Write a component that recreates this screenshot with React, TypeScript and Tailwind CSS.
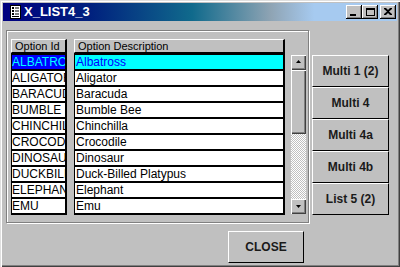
import React from "react";

const ids = ["ALBATROSS", "ALIGATOR", "BARACUDA", "BUMBLE BEE", "CHINCHILLA", "CROCODILE", "DINOSAUR", "DUCKBILL", "ELEPHANT", "EMU"];
const descs = ["Albatross", "Aligator", "Baracuda", "Bumble Bee", "Chinchilla", "Crocodile", "Dinosaur", "Duck-Billed Platypus", "Elephant", "Emu"];
const buttons = ["Multi 1 (2)", "Multi 4", "Multi 4a", "Multi 4b", "List 5 (2)"];

function WinBtn({ children, className = "" }: { children: React.ReactNode; className?: string }) {
  return (
    <div
      className={
        "w-[16px] h-[14px] bg-[#c0c0c0] flex items-center justify-center shadow-[inset_-1px_-1px_0_#000,inset_1px_1px_0_#fff,inset_-2px_-2px_0_#808080] " +
        className
      }
    >
      {children}
    </div>
  );
}

export default function App() {
  return (
    <div className="w-[400px] h-[267px] bg-[#c0c0c0] p-[3px] font-['Liberation_Sans',Arial,sans-serif] overflow-hidden shadow-[inset_1px_1px_0_#dfdfdf,inset_2px_2px_0_#fff,inset_-1px_-1px_0_#404040,inset_-2px_-2px_0_#808080]">
      {/* Title bar */}
      <div className="h-[18px] flex items-center pl-[7px] pr-[1px] bg-[linear-gradient(to_right,#000080_0%,#00207e_22%,#106a8c_48%,#8fa4b4_68%,#a6caf0_79%,#a6caf0_100%)]">
        <svg width="12" height="14" viewBox="0 0 12 14">
          <rect x="0.5" y="0.5" width="10" height="13" fill="#fff" stroke="#000" />
          <rect x="2" y="2" width="2" height="2" fill="#000" />
          <rect x="5" y="2.5" width="4" height="1" fill="#000" />
          <rect x="2" y="5" width="2" height="2" fill="#000" />
          <rect x="5" y="5.5" width="4" height="1" fill="#000" />
          <rect x="2" y="8" width="2" height="2" fill="#000" />
          <rect x="5" y="8.5" width="4" height="1" fill="#000" />
          <rect x="2" y="11" width="7" height="1" fill="#000" />
        </svg>
        <span className="ml-[2px] text-white font-bold text-[13px] leading-[14px]">X_LIST4_3</span>
        <div className="flex-1" />
        <WinBtn>
          <div className="w-[6px] h-[2px] bg-black mt-[6px] -ml-[2px]" />
        </WinBtn>
        <WinBtn>
          <div className="w-[9px] h-[8px] border border-black border-t-2 -mt-[1px]" />
        </WinBtn>
        <WinBtn className="ml-[2px]">
          <svg width="8" height="7" viewBox="0 0 8 7" className="-mt-[1px]">
            <path d="M0 0h2l2 2 2-2h2v1L5 3.5 8 6v1H6L4 5 2 7H0V6l3-2.5L0 1z" fill="#000" />
          </svg>
        </WinBtn>
      </div>

      {/* Body */}
      <div className="flex mt-[9px]">
        <div className="ml-[3px] flex flex-col">
          {/* Group box */}
          <div className="w-[303px] h-[193px] border border-[#808080] shadow-[1px_1px_0_#fff,inset_1px_1px_0_#fff] pt-[8px] pl-[4px] flex">
            {/* Column 1 */}
            <div className="w-[56px] flex flex-col">
              <div className="h-[14px] bg-[#c0c0c0] border-t border-l border-white border-r-2 border-r-black border-b border-b-black text-[11px] leading-[12px] pl-[3px] text-black whitespace-nowrap overflow-hidden">
                Option Id
              </div>
              <div className="border-t-2 border-black">
                {ids.map((t, i) => (
                  <div
                    key={t}
                    className={
                      "h-[16px] border-l border-l-black border-r-2 border-r-black border-b-2 border-b-black text-[12px] leading-[14px] whitespace-nowrap overflow-hidden " +
                      (i === 0 ? "bg-[#0000ff] text-[#00ffff]" : "bg-white text-black")
                    }
                  >
                    {t}
                  </div>
                ))}
              </div>
            </div>
            {/* Column 2 */}
            <div className="w-[211px] ml-[7px] flex flex-col">
              <div className="h-[14px] bg-[#c0c0c0] border-t border-l border-white border-r-2 border-r-black border-b border-b-black text-[11px] leading-[12px] pl-[3px] text-black whitespace-nowrap overflow-hidden">
                Option Description
              </div>
              <div className="border-t-2 border-black">
                {descs.map((t, i) => (
                  <div
                    key={t}
                    className={
                      "h-[16px] border-l border-l-black border-r-2 border-r-black border-b-2 border-b-black text-[12px] leading-[14px] pl-[1px] whitespace-nowrap overflow-hidden " +
                      (i === 0 ? "bg-[#00ffff] text-[#0000ff]" : "bg-white text-black")
                    }
                  >
                    {t}
                  </div>
                ))}
              </div>
            </div>
            {/* Scrollbar */}
            <div className="w-[15px] ml-[6px] mt-[16px] h-[159px] flex flex-col">
              <div className="h-[15px] bg-[#c0c0c0] flex items-center justify-center shadow-[inset_1px_1px_0_#fff,inset_-1px_-1px_0_#404040,inset_-2px_-2px_0_#808080]">
                <svg width="5" height="3" viewBox="0 0 5 3" className="-mt-[2px] -ml-[1px]">
                  <path d="M2.5 0L5 3H0z" fill="#000" />
                </svg>
              </div>
              <div className="h-[64px] bg-[#c0c0c0] shadow-[inset_1px_1px_0_#fff,inset_-1px_-1px_0_#404040,inset_-2px_-2px_0_#808080]" />
              <div className="flex-1 bg-[repeating-conic-gradient(#c0c0c0_0_25%,#ffffff_0_50%)] bg-[length:2px_2px]" />
              <div className="h-[15px] bg-[#c0c0c0] flex items-center justify-center shadow-[inset_1px_1px_0_#fff,inset_-1px_-1px_0_#404040,inset_-2px_-2px_0_#808080]">
                <svg width="5" height="3" viewBox="0 0 5 3" className="-ml-[1px]">
                  <path d="M0 0H5L2.5 3z" fill="#000" />
                </svg>
              </div>
            </div>
          </div>
          {/* CLOSE */}
          <div className="mt-[8px] ml-[222px] w-[76px] h-[32px] bg-[#c0c0c0] border-t border-l border-white border-r border-b border-r-black border-b-black flex items-center justify-center text-[12px] font-bold text-[#1a1a1a]">
            CLOSE
          </div>
        </div>

        {/* Right buttons */}
        <div className="ml-[3px] mt-[25px] flex flex-col">
          {buttons.map((b) => (
            <div
              key={b}
              className="w-[77px] h-[32px] bg-[#c0c0c0] border-t border-l border-white border-r border-b border-r-black border-b-black flex items-center justify-center text-[12px] font-bold text-[#1a1a1a]"
            >
              {b}
            </div>
          ))}
        </div>
      </div>
    </div>
  );
}
